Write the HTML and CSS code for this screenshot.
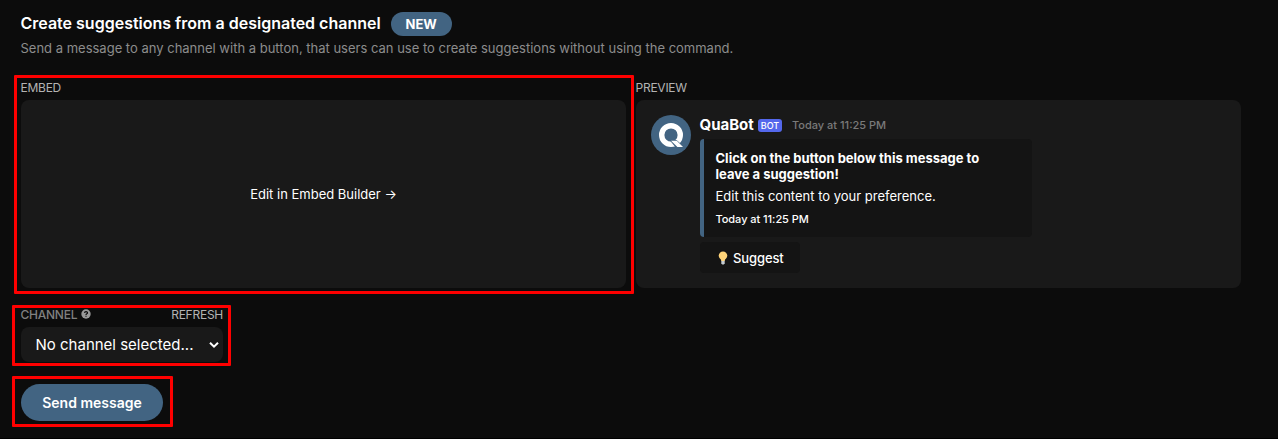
FILE: index.html
```html
<!DOCTYPE html>
<html lang="en">
<head>
<meta charset="utf-8">
<title>Suggestions</title>
<link rel="stylesheet" href="styles.css">
</head>
<body>
<main class="page">
  <header class="heading">
    <h1 class="title">Create suggestions from a designated channel</h1>
    <span class="badge">NEW</span>
  </header>
  <p class="description">Send a message to any channel with a button, that users can use to create suggestions without using the command.</p>

  <div class="columns">
    <section class="column">
      <h2 class="label">EMBED</h2>
      <a class="card card-link">Edit in Embed Builder →</a>
      <span class="mark mark-embed"></span>
    </section>
    <section class="column">
      <h2 class="label">PREVIEW</h2>
      <div class="card message">
        <svg class="avatar" viewBox="0 0 40 40">
          <circle cx="20" cy="20" r="20" fill="#426482"/>
          <circle cx="20" cy="20" r="9.300" fill="none" stroke="#fff" stroke-width="5.400"/>
          <path d="M18.500 25h7l9.500 8.500H25.500z" fill="#426482"/>
          <path d="M20 25.800h5.800l6.200 6.200H26.400z" fill="#fff"/>
        </svg>
        <div class="message-body">
          <div class="author">
            <span class="name">QuaBot</span>
            <span class="bot">BOT</span>
            <time class="time">Today at 11:25 PM</time>
          </div>
          <div class="embed">
            <h3 class="embed-title">Click on the button below this message to leave a suggestion!</h3>
            <p class="embed-text">Edit this content to your preference.</p>
            <p class="embed-footer">Today at 11:25 PM</p>
          </div>
          <div class="suggest">
            <svg class="bulb" viewBox="0 0 10 14">
              <path d="M3.300 8h3.400v4.200L5.800 13.500H4.200L3.300 12.200z" fill="#c4cbd0"/>
              <path d="M5 .5a4.300 4.300 0 0 1 4.300 4.300C9.300 7 7 8 6.400 10H3.600C3 8 .7 7 .7 4.800A4.300 4.300 0 0 1 5 .5z" fill="#ffd479"/>
            </svg>
            <span>Suggest</span>
          </div>
        </div>
      </div>
    </section>
  </div>

  <section class="channel">
    <div class="channel-head">
      <span class="channel-label">CHANNEL</span>
      <svg class="help" viewBox="0 0 10 10">
        <circle cx="5" cy="5" r="4.700" fill="#999"/>
        <path d="M3.500 3.900C3.600 2.200 6.500 2.200 6.500 3.900 6.500 4.900 5 4.800 5 5.900M5 6.700v1.100" fill="none" stroke="#0c0c0c" stroke-width="1.200"/>
      </svg>
      <span class="refresh">REFRESH</span>
    </div>
    <div class="select">
      <span>No channel selected...</span>
      <svg class="chevron" viewBox="0 0 10 8"><path d="M1 1.700l4 4 4-4" fill="none" stroke="#fff" stroke-width="2"/></svg>
    </div>
    <span class="mark mark-channel"></span>
  </section>

  <div class="actions">
    <button class="send">Send message</button>
    <span class="mark mark-send"></span>
  </div>
</main>
</body>
</html>
```
FILE: styles.css
```css
* { box-sizing: border-box; margin: 0; }
body {
  height: 439px;
  overflow: hidden;
  background: #0c0c0c;
  color: #fff;
  font-family: Inter, "Liberation Sans", sans-serif;
}
.page { height: 439px; padding: 12px 37px 0 21px; border-bottom: 1px solid #000; }
.heading { display: flex; align-items: center; gap: 10px; height: 24px; }
.title { font-size: 16px; font-weight: 600; line-height: 22px; height: 24px; white-space: nowrap; text-indent: -0.5px; }
.badge {
  width: 61px; height: 24px; border-radius: 12px; background: #426482;
  font-size: 13px; font-weight: 700; line-height: 24px; text-align: center;
}
.description { margin-top: 2px; color: #8c8c8c; font-size: 13px; line-height: 20px; white-space: nowrap; text-indent: -0.5px; }
.columns { display: grid; grid-template-columns: 605px 605px; gap: 10px; margin-top: 22px; }
.column, .channel, .actions { position: relative; }
.label { height: 20px; color: #b3b3b3; font-size: 12px; font-weight: 400; line-height: 16px; letter-spacing: -0.25px; text-indent: -0.5px; }
.card { height: 188px; border-radius: 8px; background: #191919; }
.card-link { display: flex; align-items: center; justify-content: center; font-size: 13px; }
.message { display: flex; gap: 9px; padding: 15px; }
.avatar { width: 40px; height: 40px; flex: none; }
.message-body { width: 332px; }
.author { display: flex; align-items: center; height: 20px; margin-bottom: 4px; }
.name { width: 54px; font-size: 15px; font-weight: 700; line-height: 20px; text-indent: -0.5px; white-space: nowrap; }
.bot {
  width: 24px; height: 13px; margin: 0 10px 0 4px; border-radius: 3px; background: #5468ec;
  font-size: 9px; font-weight: 500; line-height: 13px; text-align: center;
}
.time { color: #7a7a7a; font-size: 11px; font-weight: 500; }
.embed { height: 98px; padding: 11px 40px 0 11.5px; border-left: 4px solid #426482; border-radius: 4px; background: #141414; }
.embed-title { font-size: 13px; font-weight: 700; line-height: 16px; }
.embed-text { margin-top: 6px; font-size: 13px; line-height: 16px; }
.embed-footer { margin-top: 8px; font-size: 11px; font-weight: 500; line-height: 14px; letter-spacing: -0.05px; }
.suggest {
  display: flex; align-items: center; gap: 5px; width: 100px; height: 31px; margin-top: 5px;
  padding-left: 18px; border-radius: 4px; background: #141414; font-size: 13px; font-weight: 500; letter-spacing: -0.1px;
}
.bulb { width: 10px; height: 14px; }
.channel { width: 202px; margin-top: 18px; }
.channel-head { display: flex; align-items: center; height: 16px; margin-bottom: 5px; font-size: 12px; letter-spacing: -0.25px; text-indent: -0.5px; }
.channel-label { color: #808080; font-weight: 500; }
.help { width: 10px; height: 10px; margin-left: 4px; }
.refresh { margin-left: auto; color: #b3b3b3; }
.select {
  display: flex; align-items: center; justify-content: space-between; height: 35px;
  padding: 0 4px 0 14.5px; border-radius: 8px; background: #191919; font-size: 15px; white-space: nowrap;
}
.chevron { width: 10px; height: 8px; }
.actions { width: 142px; margin-top: 22px; }
.send {
  display: block; width: 142px; height: 37px; padding: 0; border: 0; border-radius: 19px;
  background: #426482; color: #fff; font: 600 14px/37px Inter, "Liberation Sans", sans-serif;
}
/* Highlight frames drawn over the form */
.mark { position: absolute; border: 3px solid #f00; border-radius: 1px; pointer-events: none; }
.mark-embed { left: -7px; top: -5px; width: 620px; height: 219px; }
.mark-channel { left: -9px; top: -1px; width: 219px; height: 61px; }
.mark-send { left: -9px; top: -8px; width: 161px; height: 51px; }
```
